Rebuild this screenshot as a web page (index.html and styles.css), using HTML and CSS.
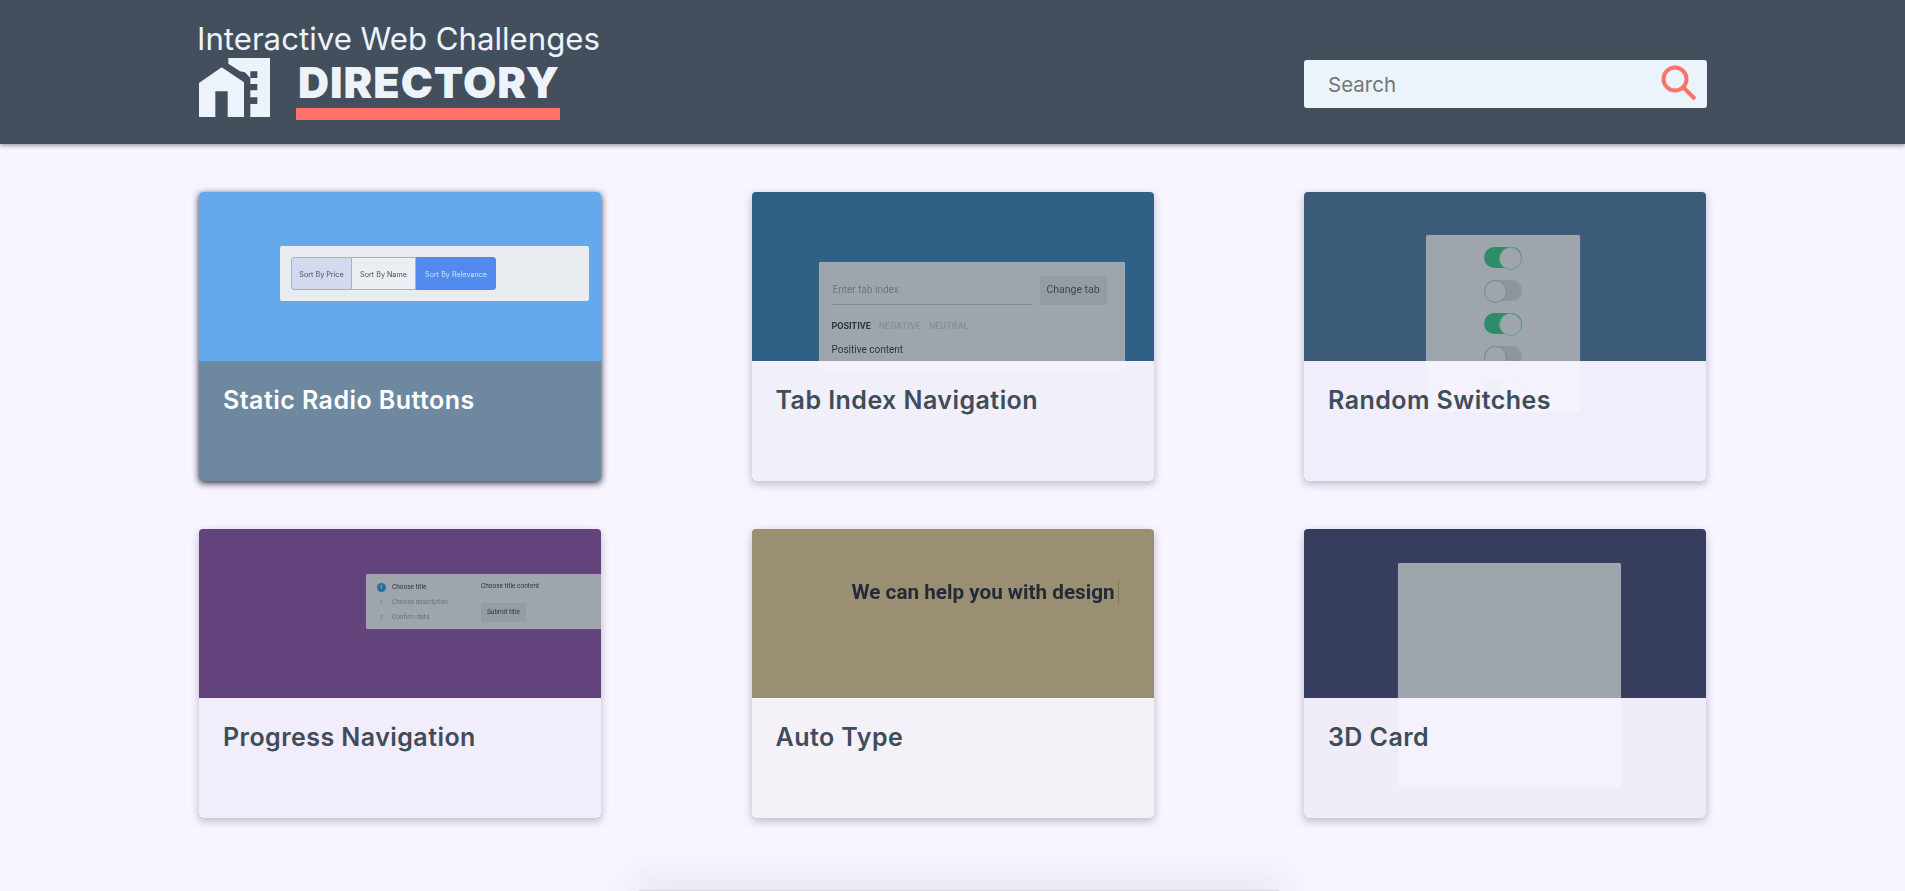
FILE: index.html
```html
<!DOCTYPE html>
<html lang="en">
	<head>
		<meta charset="UTF-8">
		<meta name="viewport" content="width=device-width, initial-scale=1.0">
		<title>Interactive Web Challenges Directory</title>
		<link rel="stylesheet" href="styles.css">
	</head>
	<body>
		<header class="site-header">
			<div class="header-inner">
				<div class="brand">
					<div class="brand-top">Interactive Web Challenges</div>
					<div class="brand-row">
						<svg class="brand-logo" viewBox="27 25 213 177" width="71" height="59">
							<path fill="#ecf3fb" d="M27 100 95 53 162 98V202H113V125H76V202H27Z"/>
							<path fill="#ecf3fb" d="M115 25H240V202H181V163H202V143H181V122H202V103H181V85H202V65H181V85L165 68 150 65 115 42Z"/>
						</svg>
						<div class="brand-name">DIRECTORY</div>
					</div>
				</div>
				<form class="search">
					<input class="search-input" type="text" placeholder="Search">
					<svg class="search-icon" viewBox="0 0 38 38" width="38" height="38">
						<circle cx="15" cy="15" r="11.5" fill="none" stroke="#ff726c" stroke-width="4"/>
						<path d="M23.5 23.5 35 35" fill="none" stroke="#ff726c" stroke-width="4"/>
					</svg>
				</form>
			</div>
		</header>

		<main class="card-grid">
			<a class="card card-active" href="#">
				<div class="preview preview-radio">
					<div class="radio-bar">
						<div class="radio-group">
							<span class="radio-btn radio-price">Sort By Price</span>
							<span class="radio-btn radio-name">Sort By Name</span>
							<span class="radio-btn radio-relevance">Sort By Relevance</span>
						</div>
					</div>
				</div>
				<h2 class="card-body">Static Radio Buttons</h2>
			</a>

			<a class="card" href="#">
				<div class="preview preview-tabs">
					<div class="panel tabs-panel">
						<div class="tabs-form">
							<span class="tabs-input">Enter tab index</span>
							<span class="tabs-btn">Change tab</span>
						</div>
						<div class="tabs-list">
							<b class="tab-on">POSITIVE</b>
							<b>NEGATIVE</b>
							<b>NEUTRAL</b>
						</div>
						<p class="tabs-content">Positive content</p>
					</div>
				</div>
				<h2 class="card-body">Tab Index Navigation</h2>
			</a>

			<a class="card" href="#">
				<div class="preview preview-switches">
					<div class="panel switches-panel">
						<span class="switch switch-on"></span>
						<span class="switch"></span>
						<span class="switch switch-on"></span>
						<span class="switch"></span>
						<span class="switch switch-on"></span>
					</div>
				</div>
				<h2 class="card-body">Random Switches</h2>
			</a>

			<a class="card" href="#">
				<div class="preview preview-progress">
					<div class="panel progress-panel">
						<ol class="steps">
							<li class="step step-on"><i>1</i>Choose title</li>
							<li class="step"><i>2</i>Choose description</li>
							<li class="step"><i>3</i>Confirm data</li>
						</ol>
						<div class="step-detail">
							<p>Choose title content</p>
							<span class="step-btn">Submit title</span>
						</div>
					</div>
				</div>
				<h2 class="card-body">Progress Navigation</h2>
			</a>

			<a class="card" href="#">
				<div class="preview preview-type">
					<div class="type-line">We can help you with design<span class="type-caret"></span></div>
				</div>
				<h2 class="card-body">Auto Type</h2>
			</a>

			<a class="card" href="#">
				<div class="preview preview-3d">
					<div class="panel panel-3d"></div>
				</div>
				<h2 class="card-body">3D Card</h2>
			</a>
		</main>

		<div class="bottom-sheet"></div>
	</body>
</html>
```

FILE: styles.css
```css
* {
    box-sizing: border-box;
}
html, body {
    height: 100%;
}
body {
    background-color: #f8f5ff;
    color: #3f4c5a;
    font-family: "Inter", "Liberation Sans", sans-serif;
    margin: 0;
    overflow: hidden;
}

/* header */
.site-header {
    background-color: #434f5d;
    box-shadow: 0 2px 4px rgba(0,0,0,.35);
    height: 144px;
}
.header-inner {
    align-items: flex-start;
    display: flex;
    justify-content: space-between;
    margin: 0 auto;
    width: 1507px;
}
.brand {
    color: #ecf3fb;
    margin-left: -2px;
    padding-top: 21px;
}
.brand-top {
    font-size: 31.2px;
    font-weight: 400;
    line-height: 36px;
    white-space: nowrap;
}
.brand-row {
    align-items: flex-start;
    display: flex;
    margin-top: 1px;
}
.brand-logo {
    margin-left: 2px;
}
.brand-name {
    border-bottom: 12px solid #ff726c;
    font-size: 43px;
    font-weight: 900;
    letter-spacing: 1px;
    line-height: 49px;
    margin-left: 26px;
    padding: 0 0 1px 2px;
    width: 264px;
    white-space: nowrap;
}
.search {
    align-items: center;
    background-color: #ebf3fb;
    border-radius: 3px;
    display: flex;
    height: 48px;
    margin: 60px -1px 0 0;
    padding: 0 9px 0 24px;
    width: 403px;
}
.search-input {
    background: none;
    border: none;
    flex: 1;
    font-family: inherit;
    font-size: 20.5px;
    outline: none;
    padding: 0;
}
.search-input::placeholder {
    color: #757575;
}
.search-icon {
    margin-top: -3px;
}

/* cards */
.card-grid {
    display: grid;
    column-gap: 150.5px;
    grid-template-columns: repeat(3, 402px);
    grid-auto-rows: 289px;
    margin: 48px auto 0;
    row-gap: 48px;
    width: 1507px;
}
.card {
    border-radius: 4px;
    box-shadow: 0 3px 9px rgba(50,60,90,.32);
    color: inherit;
    display: grid;
    overflow: hidden;
    text-decoration: none;
}
.card-active {
    box-shadow: 0 2px 7px rgba(25,30,45,.95);
}
.preview, .card-body {
    grid-area: 1 / 1;
}
.preview {
    display: flex;
    font-family: "Roboto", sans-serif;
    min-width: 0;
}
.card-body {
    background-color: rgba(248,245,255,.96);
    font-size: 25px;
    font-weight: 600;
    letter-spacing: .45px;
    line-height: 30px;
    margin: 169px 0 0;
    padding: 24px 24px 0;
    position: relative;
}
.card-active .card-body {
    background-color: #6d889f;
    color: white;
}
.panel {
    background-color: #9ea5ad;
    border-radius: 2px;
    box-shadow: 0 0 1px rgba(255,255,255,.4);
    flex: none;
    filter: blur(.7px);
}

/* static radio buttons */
.preview-radio {
    background-color: #63a9ec;
    padding: 54px 0 0 81px;
}
.radio-bar {
    background-color: #e8ecf0;
    border-radius: 2px;
    filter: blur(.7px);
    height: 55px;
    padding: 11px;
    width: 309px;
}
.radio-group {
    display: flex;
    font-family: "Inter", sans-serif;
    font-size: 7.2px;
    height: 33px;
}
.radio-btn {
    align-items: center;
    border: 1.5px solid #8fb4ee;
    color: #4a4f5a;
    display: flex;
    justify-content: center;
    padding-top: 1px;
}
.radio-price {
    background-color: #d3d9ee;
    border-radius: 3px 0 0 3px;
    width: 61px;
}
.radio-name {
    background-color: #ebeef2;
    border-left: none;
    width: 64px;
}
.radio-relevance {
    background-color: #528aed;
    border-color: #528aed;
    border-radius: 0 3px 3px 0;
    color: #cfe0fb;
    width: 80px;
}

/* tab index navigation */
.preview-tabs {
    background-color: #2f6086;
    padding: 70px 0 0 67px;
}
.tabs-panel {
    color: #3f4650;
    font-size: 10px;
    height: 108px;
    padding: 14px 18px 0 13px;
    width: 306px;
}
.tabs-form {
    display: flex;
    gap: 8px;
}
.tabs-input {
    border-bottom: 1px solid #80878f;
    color: #6f767e;
    flex: 1;
    line-height: 28px;
    padding-left: 1px;
}
.tabs-btn {
    background-color: #959ca4;
    font-size: 10.5px;
    line-height: 28px;
    text-align: center;
    width: 67px;
}
.tabs-list {
    color: #8a9098;
    display: flex;
    font-size: 9px;
    gap: 8px;
    margin-top: 16px;
}
.tabs-list b {
    font-weight: 700;
}
.tabs-list .tab-on {
    color: #2f353d;
}
.tabs-content {
    color: #2f353d;
    margin: 13px 0 0;
}

/* random switches */
.preview-switches {
    background-color: #3c5b78;
    padding: 43px 0 0 122px;
}
.switches-panel {
    align-items: center;
    display: flex;
    flex-direction: column;
    gap: 12px;
    height: 177px;
    padding-top: 12px;
    width: 154px;
}
.switch {
    background-color: #8f959d;
    border-radius: 11px;
    display: flex;
    flex: none;
    height: 21px;
    width: 38px;
}
.switch::before {
    background-color: #9ea5ad;
    border: 1px solid #7d848c;
    border-radius: 50%;
    content: "";
    height: 21px;
    width: 21px;
}
.switch-on {
    background-color: #2e8c66;
    justify-content: flex-end;
}
.switch-on::before {
    border-color: #5fa387;
}

/* progress navigation */
.preview-progress {
    background-color: #62437c;
    padding: 45px 0 0 167px;
}
.progress-panel {
    color: #2f353d;
    display: flex;
    font-size: 6.5px;
    height: 55px;
    padding: 8px 0 0 11px;
    width: 300px;
}
.steps {
    display: flex;
    flex-direction: column;
    gap: 5px;
    list-style: none;
    margin: 0;
    padding: 0;
    width: 104px;
}
.step {
    align-items: center;
    color: #6b727a;
    display: flex;
    height: 10px;
}
.step i {
    border-radius: 50%;
    flex: none;
    font-size: 5px;
    font-style: normal;
    height: 9px;
    line-height: 9px;
    margin-right: 6px;
    text-align: center;
    width: 9px;
}
.step-on {
    color: #2f353d;
}
.step-on i {
    background-color: #2f6f9e;
    color: #9ec3de;
}
.step-detail p {
    font-size: 6.5px;
    line-height: 8px;
    margin: 0;
}
.step-btn {
    background-color: #959ca4;
    display: block;
    line-height: 19px;
    margin-top: 13px;
    text-align: center;
    width: 45px;
}

/* auto type */
.preview-type {
    background-color: #9a8e73;
    padding: 49px 0 0 100px;
}
.type-line {
    align-items: center;
    color: #232b38;
    display: flex;
    filter: blur(.4px);
    font-size: 20.7px;
    font-weight: 700;
    height: 28px;
    white-space: nowrap;
}
.type-caret {
    background-color: #7d7562;
    height: 23px;
    margin-left: 3px;
    width: 1px;
}

/* 3d card */
.preview-3d {
    background-color: #373d5c;
    padding: 34px 0 0 94px;
}
.panel-3d {
    height: 224px;
    width: 223px;
}

/* sheet peeking in at the bottom of the window */
.bottom-sheet {
    background-color: #d8d8e0;
    bottom: 0;
    box-shadow: 0 0 36px 6px rgba(70,70,120,.2);
    height: 1px;
    left: 639px;
    position: fixed;
    width: 640px;
}
```
